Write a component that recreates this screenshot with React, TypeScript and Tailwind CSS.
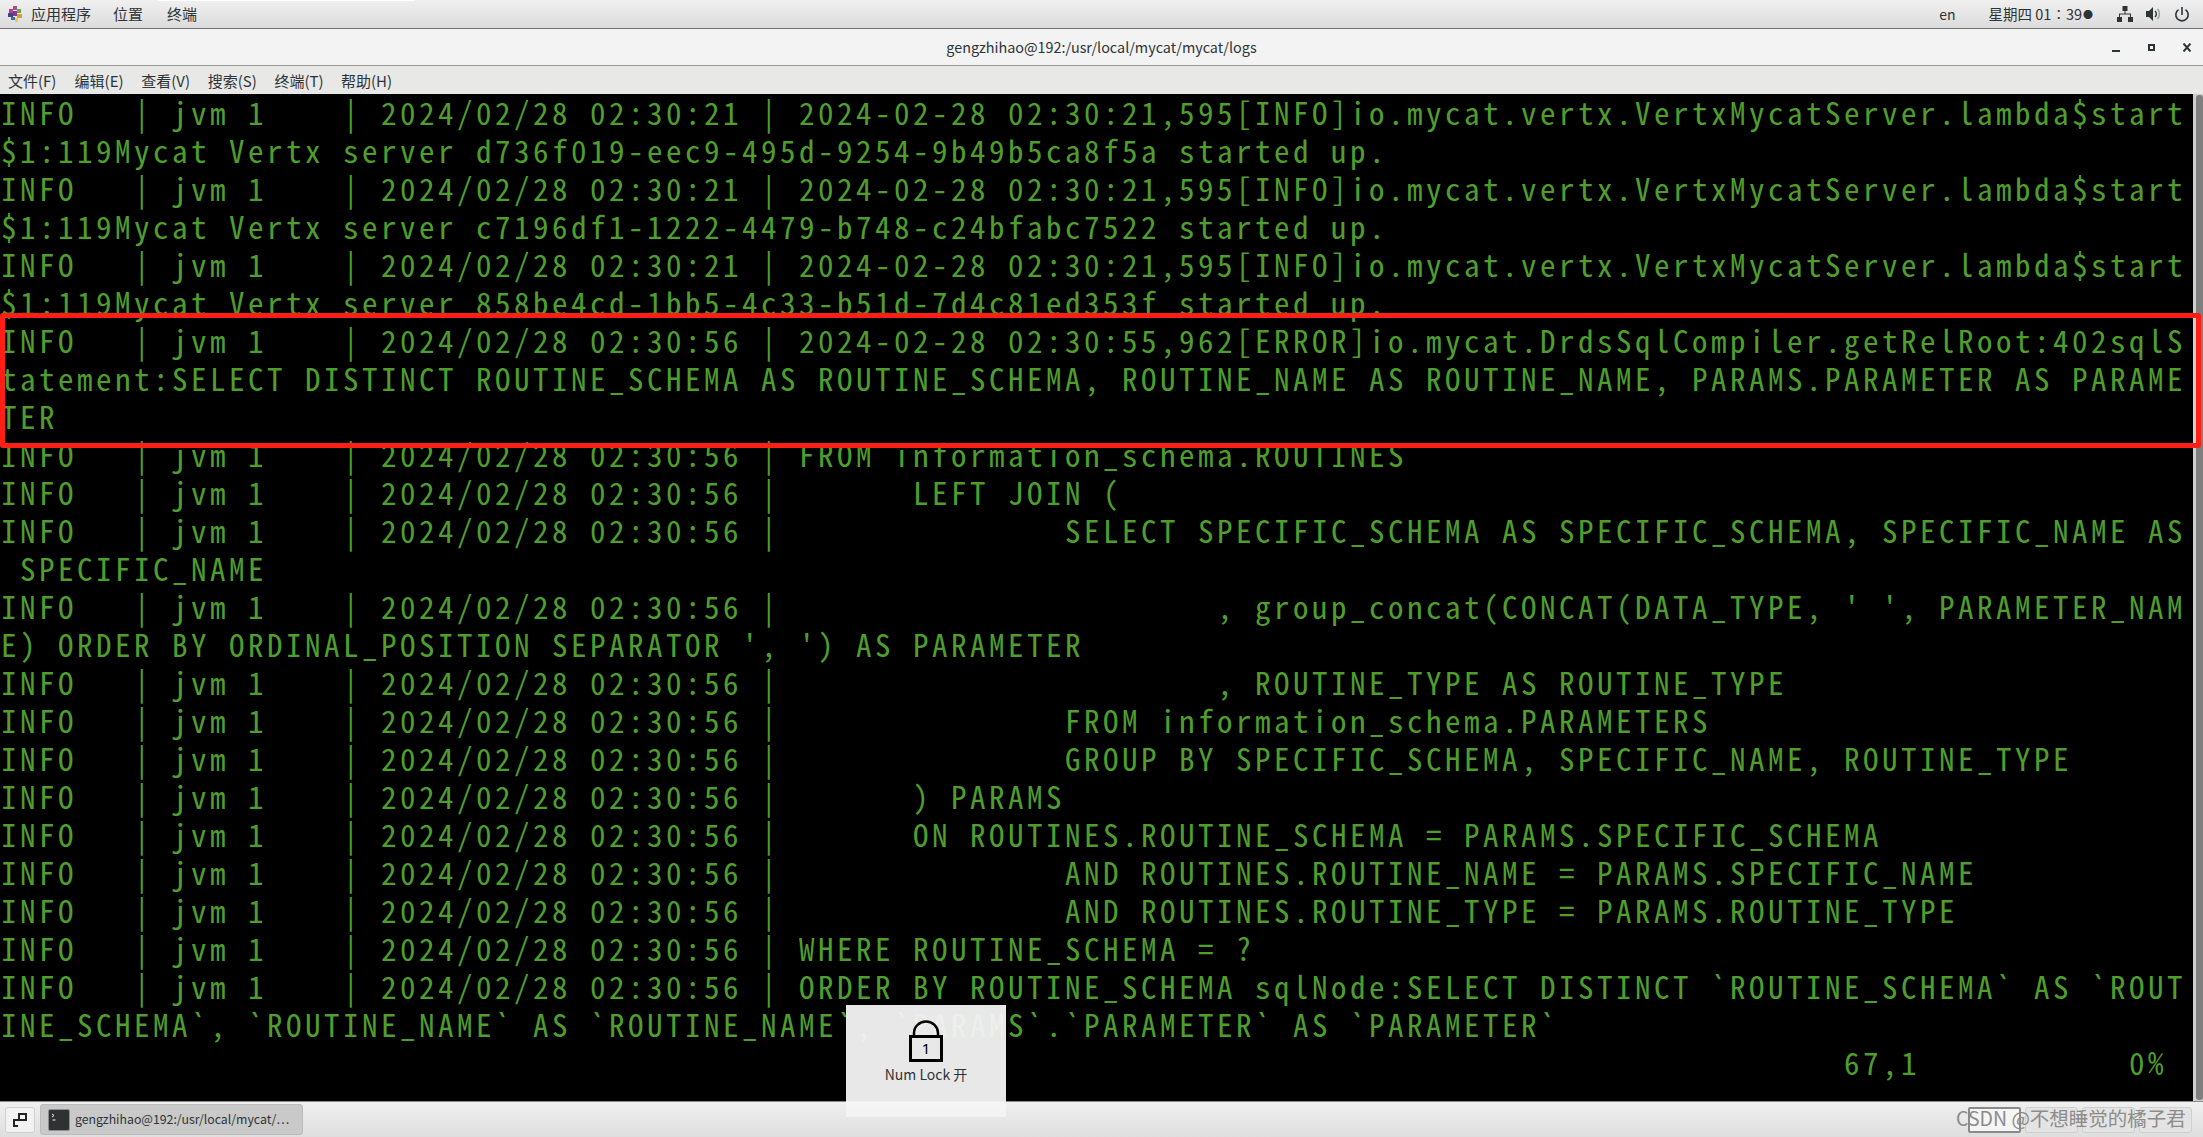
const P21 = 'INFO   | jvm 1    | 2024/02/28 02:30:21 | '
const P = 'INFO   | jvm 1    | 2024/02/28 02:30:56 | '
const pad = (n: number) => ' '.repeat(n)

const lines = [
  P21 + '2024-02-28 02:30:21,595[INFO]io.mycat.vertx.VertxMycatServer.lambda$start',
  '$1:119Mycat Vertx server d736f019-eec9-495d-9254-9b49b5ca8f5a started up.',
  P21 + '2024-02-28 02:30:21,595[INFO]io.mycat.vertx.VertxMycatServer.lambda$start',
  '$1:119Mycat Vertx server c7196df1-1222-4479-b748-c24bfabc7522 started up.',
  P21 + '2024-02-28 02:30:21,595[INFO]io.mycat.vertx.VertxMycatServer.lambda$start',
  '$1:119Mycat Vertx server 858be4cd-1bb5-4c33-b51d-7d4c81ed353f started up.',
  P + '2024-02-28 02:30:55,962[ERROR]io.mycat.DrdsSqlCompiler.getRelRoot:402sqlS',
  'tatement:SELECT DISTINCT ROUTINE_SCHEMA AS ROUTINE_SCHEMA, ROUTINE_NAME AS ROUTINE_NAME, PARAMS.PARAMETER AS PARAME',
  'TER',
  P + 'FROM information_schema.ROUTINES',
  P + pad(6) + 'LEFT JOIN (',
  P + pad(14) + 'SELECT SPECIFIC_SCHEMA AS SPECIFIC_SCHEMA, SPECIFIC_NAME AS',
  ' SPECIFIC_NAME',
  P + pad(22) + ", group_concat(CONCAT(DATA_TYPE, ' ', PARAMETER_NAM",
  "E) ORDER BY ORDINAL_POSITION SEPARATOR ', ') AS PARAMETER",
  P + pad(22) + ', ROUTINE_TYPE AS ROUTINE_TYPE',
  P + pad(14) + 'FROM information_schema.PARAMETERS',
  P + pad(14) + 'GROUP BY SPECIFIC_SCHEMA, SPECIFIC_NAME, ROUTINE_TYPE',
  P + pad(6) + ') PARAMS',
  P + pad(6) + 'ON ROUTINES.ROUTINE_SCHEMA = PARAMS.SPECIFIC_SCHEMA',
  P + pad(14) + 'AND ROUTINES.ROUTINE_NAME = PARAMS.SPECIFIC_NAME',
  P + pad(14) + 'AND ROUTINES.ROUTINE_TYPE = PARAMS.ROUTINE_TYPE',
  P + 'WHERE ROUTINE_SCHEMA = ?',
  P + 'ORDER BY ROUTINE_SCHEMA sqlNode:SELECT DISTINCT `ROUTINE_SCHEMA` AS `ROUT',
  'INE_SCHEMA`, `ROUTINE_NAME` AS `ROUTINE_NAME`, `PARAMS`.`PARAMETER` AS `PARAMETER`',
  pad(97) + '67,1' + pad(11) + '0%',
]

const menus = ['文件(F)', '编辑(E)', '查看(V)', '搜索(S)', '终端(T)', '帮助(H)']

function AppLogo() {
  return (
    <svg width="14" height="16" viewBox="0 0 14 16">
      <rect x="5" y="0" width="4" height="4" fill="#a4527f" />
      <rect x="1" y="3" width="4" height="4" fill="#c43c7e" />
      <rect x="9" y="3" width="4" height="4" fill="#6fa548" />
      <rect x="0" y="7" width="5" height="4" fill="#4a3f8f" />
      <rect x="5" y="5" width="4" height="5" fill="#7a3e8c" />
      <rect x="9" y="8" width="5" height="4" fill="#d9a02e" />
      <rect x="3" y="11" width="4" height="3" fill="#3b6fb0" />
      <rect x="7" y="12" width="3" height="4" fill="#e4cf4a" />
    </svg>
  )
}

function NetworkIcon() {
  return (
    <svg width="16" height="16" viewBox="0 0 16 16" fill="#2e3436">
      <rect x="5.5" y="0" width="5" height="5" />
      <rect x="7.5" y="5" width="1" height="3" />
      <rect x="2" y="7.5" width="12" height="1" />
      <rect x="2" y="8" width="1" height="3" />
      <rect x="13" y="8" width="1" height="3" />
      <rect x="0" y="11" width="5" height="5" />
      <rect x="11" y="11" width="5" height="5" />
    </svg>
  )
}

function VolumeIcon() {
  return (
    <svg width="15" height="16" viewBox="0 0 15 16" fill="none">
      <path d="M0 5h3l4-4v14l-4-4H0z" fill="#2e3436" />
      <path d="M9 5a4 4 0 0 1 0 6" stroke="#2e3436" strokeWidth="1.4" />
      <path d="M11.5 3a7.5 7.5 0 0 1 0 10" stroke="#9a9a9a" strokeWidth="1.4" />
    </svg>
  )
}

function PowerIcon() {
  return (
    <svg width="16" height="17" viewBox="0 0 16 17" fill="none" stroke="#2e3436" strokeWidth="1.6">
      <path d="M8 1v8" />
      <path d="M4.5 3.6a6.2 6.2 0 1 0 7 0" />
    </svg>
  )
}

function LockIcon() {
  return (
    <svg width="34" height="42" viewBox="0 0 34 42" fill="none" stroke="#000">
      <path d="M5 15V13a12 11.5 0 0 1 24 0v2" strokeWidth="2.5" />
      <rect x="1.5" y="16.5" width="31" height="24" strokeWidth="3" />
      <text x="17" y="34" textAnchor="middle" fontSize="15" fill="#000" stroke="none" fontFamily="'Noto Sans', sans-serif">1</text>
    </svg>
  )
}

function TerminalIcon() {
  return (
    <svg width="22" height="22" viewBox="0 0 22 22">
      <rect x="0.5" y="0.5" width="21" height="21" rx="1.5" fill="#2f3232" stroke="#8f8f8f" />
      <path d="M4 5l2 1.5-2 1.5M4.5 11h3" stroke="#eee" fill="none" />
    </svg>
  )
}

export default function App() {
  return (
    <div className="relative flex h-[1137px] w-[2203px] flex-col overflow-hidden bg-black font-['Noto_Sans_CJK_SC','Noto_Sans',sans-serif]">
      {/* top panel */}
      <div className="flex h-[29px] shrink-0 items-center border-b border-[#6f6f6f] bg-linear-to-b from-[#f0f0f0] to-[#dcdcdc] text-[15px] text-[#2e3436]">
        <div className="ml-[8px] flex w-[23px] items-center"><AppLogo /></div>
        <span className="w-[82px]">应用程序</span>
        <span className="w-[54px]">位置</span>
        <span>终端</span>
        <span className="ml-auto text-[14px]">en</span>
        <span className="ml-[33px] flex items-center gap-[1px] text-[14.5px]">星期四 01∶39<span className="text-[10px]">●</span></span>
        <div className="ml-[24px] flex items-center gap-[13px] pr-[13px]">
          <NetworkIcon />
          <VolumeIcon />
          <PowerIcon />
        </div>
      </div>

      {/* title bar */}
      <div className="flex h-[37px] shrink-0 items-center border-b border-[#9a9a9a] bg-[#f3f3f3] text-[14.4px] text-[#2e3436]">
        <div className="flex-1 pl-[91px] text-center">gengzhihao@192:/usr/local/mycat/mycat/logs</div>
        <div className="flex items-center gap-[28px] pr-[12px]">
          <span className="mt-[7px] h-[2px] w-[8px] bg-[#2e3436]" />
          <span className="size-[7px] border-2 border-[#2e3436]" />
          <svg width="8" height="9" viewBox="0 0 8 9" stroke="#2e3436" strokeWidth="2"><path d="M0.5 0.5l7 8M7.5 0.5l-7 8" /></svg>
        </div>
      </div>

      {/* menu bar */}
      <div className="flex h-[28px] shrink-0 items-center gap-[16px] bg-[#e8e8e7] pl-[8px] text-[15px] leading-none text-[#2e3436]">
        {menus.map((m) => (
          <span key={m} className="w-[50.6px] whitespace-nowrap">{m}</span>
        ))}
      </div>

      {/* terminal */}
      <div className="flex h-[1007px] shrink-0">
        <div className="min-w-0 flex-1 whitespace-pre bg-black pl-[1px] text-[31px] leading-[36px] tracking-[3.5px] text-[#4f9e2c] [font-feature-settings:'hwid']">
          {lines.map((l, i) => (
            <div key={i} className="h-[38px]">{l}</div>
          ))}
        </div>
        <div className="flex w-[10px] shrink-0 justify-end bg-[#cfcfcf] py-[1px]">
          <div className="w-[7px] rounded-[3px] bg-[#7f7f7f]" />
        </div>
      </div>

      {/* taskbar */}
      <div className="flex h-[36px] shrink-0 items-center border-t border-[#8a8a8a] bg-linear-to-b from-[#f0f0f0] to-[#dedede] text-[12.3px] text-[#2e3436]">
        <div className="ml-[5px] flex h-[26px] w-[30px] items-center justify-center rounded-[3px] border border-[#cfcfcf] bg-[#f2f2f2]">
          <svg width="14" height="14" viewBox="0 0 14 14" fill="none" stroke="#222" strokeWidth="2">
            <rect x="6" y="1" width="7" height="6" />
            <path d="M5 7H1v6h4" />
          </svg>
        </div>
        <div className="ml-[5px] flex h-[31px] w-[263px] items-center gap-[5px] rounded-[3px] border border-[#bcbcbc] bg-[#c9c9c9] pl-[7px]">
          <TerminalIcon />
          <span className="whitespace-nowrap">gengzhihao@192:/usr/local/mycat/⋯</span>
        </div>
        <div className="ml-auto mr-[11px] flex gap-[4px]">
          <div className="h-[26px] w-[53px] rounded-[2px] border-2 border-[#8a8a8a] bg-[#f5f5f5]" />
          <div className="h-[26px] w-[53px] rounded-[3px] border border-[#cfcfcf] bg-[#e4e4e4]" />
          <div className="h-[26px] w-[53px] rounded-[3px] border border-[#cfcfcf] bg-[#e4e4e4]" />
          <div className="h-[26px] w-[53px] rounded-[3px] border border-[#cfcfcf] bg-[#e4e4e4]" />
        </div>
      </div>

      {/* tab strip remnant along the top edge */}
      <div className="absolute left-[158px] top-0 h-[1px] w-[257px] bg-white" />

      {/* red highlight drawn over the terminal */}
      <div className="absolute left-0 top-[313px] h-[135px] w-[2201px] rounded-[3px] border-[5px] border-[#ff1f14]" />

      {/* num lock popup */}
      <div className="absolute left-[846px] top-[1005px] flex h-[112px] w-[160px] flex-col items-center bg-[#f4f4f4]/95 pt-[15px] text-[14px] leading-[20px] text-[#2e3436]">
        <LockIcon />
        <span className="mt-[2px]">Num Lock 开</span>
      </div>

      {/* watermark */}
      <div className="absolute left-[1956px] top-[1104px] text-[19.5px] leading-[28px] whitespace-nowrap text-[#8c8c8c]">CSDN @不想睡觉的橘子君</div>
    </div>
  )
}
